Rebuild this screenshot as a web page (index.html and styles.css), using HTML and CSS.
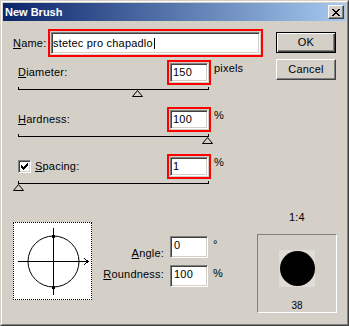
FILE: index.html
```html
<!DOCTYPE html>
<html lang="cs">
<head>
<meta charset="utf-8">
<title>New Brush</title>
<link rel="stylesheet" href="styles.css">
</head>
<body>
<div class="window">
 <div class="frame">
  <div class="titlebar">
   <span class="title">New Brush</span>
   <span class="close-btn"><svg class="close-icon" width="8" height="7" viewBox="0 0 8 7"><path d="M0 0h2v1H0zM6 0h2v1H6zM1 1h2v1H1zM5 1h2v1H5zM2 2h4v1H2zM3 3h2v1H3zM2 4h4v1H2zM1 5h2v1H1zM5 5h2v1H5zM0 6h2v1H0zM6 6h2v1H6z"/></svg></span>
  </div>
  <div class="content">
   <div class="top">
    <div class="form">
     <div class="name-row">
      <span class="lbl name-lbl"><u>N</u>ame:</span>
      <span class="hl hl-name"><span class="field field-name">stetec pro chapadlo<span class="caret"></span></span></span>
     </div>

     <div class="group group-first">
      <div class="head">
       <span class="lbl head-lbl"><u>D</u>iameter:</span>
       <span class="hl hl-num"><span class="field field-num">150</span></span>
       <span class="unit">pixels</span>
      </div>
      <div class="track"><span class="thumb" style="left:63%"><svg width="11" height="7" viewBox="0 0 11 7"><path d="M5.5 0.5L10.5 6.5H0.5Z" fill="#d4d0c8" stroke="#000"/></svg></span></div>
     </div>

     <div class="group">
      <div class="head">
       <span class="lbl head-lbl"><u>H</u>ardness:</span>
       <span class="hl hl-num"><span class="field field-num">100</span></span>
       <span class="unit">%</span>
      </div>
      <div class="track"><span class="thumb" style="left:100%"><svg width="11" height="7" viewBox="0 0 11 7"><path d="M5.5 0.5L10.5 6.5H0.5Z" fill="#d4d0c8" stroke="#000"/></svg></span></div>
     </div>

     <div class="group">
      <div class="head">
       <span class="lbl head-lbl"><span class="check"><svg width="7" height="7" viewBox="0 0 7 7"><path d="M6 0h1v1H6zM5 1h2v1H5zM0 2h1v1H0zM4 2h3v1H4zM0 3h2v1H0zM3 3h3v1H3zM0 4h5v1H0zM1 5h3v1H1zM2 6h1v1H2z"/></svg></span><span><u>S</u>pacing:</span></span>
       <span class="hl hl-num"><span class="field field-num">1</span></span>
       <span class="unit">%</span>
      </div>
      <div class="track"><span class="thumb" style="left:0%"><svg width="11" height="7" viewBox="0 0 11 7"><path d="M5.5 0.5L10.5 6.5H0.5Z" fill="#d4d0c8" stroke="#000"/></svg></span></div>
     </div>
    </div>

    <div class="buttons">
     <span class="btn btn-default">OK</span>
     <span class="btn">Cancel</span>
    </div>
   </div>

   <div class="bottom">
    <div class="shape-box">
     <svg width="77" height="76" viewBox="0 0 77 76">
      <circle cx="39.5" cy="38.5" r="25.5" fill="none" stroke="#000"/>
      <path d="M39.5 5V72M4 38.5H75M70 35.5L74.5 38.5L70 41.5" fill="none" stroke="#000" shape-rendering="crispEdges"/>
      <rect x="38" y="12" width="3" height="3" fill="#000"/>
      <rect x="38" y="63" width="3" height="3" fill="#000"/>
     </svg>
    </div>
    <div class="params">
     <div class="param-row">
      <span class="plbl plbl-angle"><u>A</u>ngle:</span>
      <span class="field field-plain">0</span>
      <span class="punit">°</span>
     </div>
     <div class="param-row">
      <span class="plbl plbl-round"><u>R</u>oundness:</span>
      <span class="field field-plain">100</span>
      <span class="punit">%</span>
     </div>
    </div>
    <div class="preview-col">
     <span class="ratio">1:4</span>
     <div class="preview">
      <span class="tip"><span class="dot"></span></span>
      <span class="size">38</span>
     </div>
    </div>
   </div>
  </div>
 </div>
</div>
</body>
</html>
```

FILE: styles.css
```css
* { box-sizing: border-box; }
html, body { margin: 0; padding: 0; }
body {
  width: 349px;
  height: 326px;
  overflow: hidden;
  background: #d4d0c8;
  font: 11px/13px "Liberation Sans", Arial, sans-serif;
  letter-spacing: 0.2px;
  color: #000;
}
u { text-decoration-thickness: 1px; text-underline-offset: 1px; }

.window {
  width: 349px;
  height: 326px;
  border: 1px solid;
  border-color: #d4d0c8 #404040 #404040 #d4d0c8;
  background: #d4d0c8;
}
.frame {
  height: 100%;
  border: 1px solid;
  border-color: #fff #808080 #808080 #fff;
  padding: 1px;
  display: flex;
  flex-direction: column;
}

.titlebar {
  flex: none;
  height: 18px;
  display: flex;
  align-items: center;
  padding: 0 2px;
  background: linear-gradient(to right, #0a246a, #a6caf0);
}
.title {
  flex: 1;
  color: #fff;
  font-weight: bold;
  letter-spacing: 0;
}
.close-btn {
  width: 16px;
  height: 14px;
  display: flex;
  align-items: center;
  justify-content: center;
  background: #d4d0c8;
  border: 1px solid;
  border-color: #fff #404040 #404040 #fff;
  box-shadow: inset -1px -1px 0 #808080;
  padding-left: 0;
}
.close-icon { display: block; }

.content { flex: 1; display: flex; flex-direction: column; }
.top { display: flex; }
.form { flex: 1; padding-left: 10px; }

.name-row {
  display: flex;
  align-items: center;
  margin-top: 8px;
  height: 28px;
}
.name-lbl { width: 35px; }

.hl {
  display: block;
  border: 2px solid #ff0000;
  padding: 1px;
}
.hl-name { width: 215px; height: 28px; }
.hl-num { width: 44px; height: 25px; }

.field {
  display: flex;
  align-items: center;
  height: 100%;
  background: #fff;
  border: 1px solid;
  border-color: #808080 #fff #fff #808080;
  box-shadow: inset 1px 1px 0 #404040, inset -1px -1px 0 #d4d0c8;
  white-space: nowrap;
  overflow: hidden;
}
.field-name { padding-left: 1px; }
.field-num { padding-left: 2px; }
.caret {
  display: inline-block;
  width: 1px;
  height: 11px;
  margin-left: 1px;
  background: #000;
}

.group { margin-top: 17px; padding-left: 5px; }
.group-first { margin-top: 3px; }
.head { display: flex; align-items: center; height: 25px; }
.head-lbl { width: 149px; display: flex; align-items: center; }
.unit { align-self: flex-start; margin-top: 2px; margin-left: 3px; }

.check {
  width: 13px;
  height: 13px;
  margin-right: 4px;
  display: flex;
  align-items: center;
  justify-content: center;
  background: #fff;
  border: 1px solid;
  border-color: #808080 #fff #fff #808080;
  box-shadow: inset 1px 1px 0 #404040, inset -1px -1px 0 #d4d0c8;
}
.check svg { display: block; }

.track {
  position: relative;
  width: 191px;
  height: 3px;
  margin-top: 2px;
  border: 1px solid #000;
  border-top: 0;
}
.thumb {
  position: absolute;
  top: calc(100% + 1px);
  margin-left: -6px;
  width: 11px;
  height: 7px;
}
.thumb svg { display: block; }

.buttons {
  width: 60px;
  margin-right: 10px;
  margin-top: 11px;
  display: flex;
  flex-direction: column;
  gap: 6px;
}
.btn {
  height: 21px;
  display: flex;
  align-items: center;
  justify-content: center;
  border: 1px solid;
  border-color: #fff #404040 #404040 #fff;
  box-shadow: inset -1px -1px 0 #808080;
}
.btn-default {
  border-color: #000;
  box-shadow: inset 1px 1px 0 #fff, inset -1px -1px 0 #404040, inset -2px -2px 0 #808080;
}

.bottom { display: flex; align-items: flex-start; }
.shape-box {
  width: 79px;
  height: 78px;
  margin-left: 10px;
  margin-top: 38px;
  background: #fff;
  border: 1px dotted #000;
}
.shape-box svg { display: block; }

.params { margin-top: 52px; display: flex; flex-direction: column; gap: 7px; }
.param-row { display: flex; align-items: flex-start; height: 22px; }
.plbl { width: 72px; text-align: right; }
.plbl-angle { margin-top: 11px; }
.plbl-round { margin-top: 3px; }
.field-plain {
  width: 38px;
  height: 22px;
  margin-left: 6px;
  padding: 2px 0 0 3px;
  align-items: flex-start;
}
.punit { margin-left: 5px; margin-top: 2px; }

.preview-col {
  margin-left: auto;
  margin-right: 9px;
  width: 80px;
  margin-top: 27px;
  display: flex;
  flex-direction: column;
  align-items: center;
}
.preview {
  width: 80px;
  height: 79px;
  margin-top: 10px;
  border: 1px solid;
  border-color: #808080 #fff #fff #808080;
  display: flex;
  flex-direction: column;
  align-items: center;
  padding-top: 15px;
}
.tip {
  width: 36px;
  height: 37px;
  background: #e0ddd6;
  display: flex;
  align-items: center;
  justify-content: center;
}
.dot {
  width: 35px;
  height: 35px;
  border-radius: 50%;
  background: #000;
}
.size {
  font-size: 10px;
  line-height: 12px;
  letter-spacing: 0;
  margin-top: 13px;
}
```
